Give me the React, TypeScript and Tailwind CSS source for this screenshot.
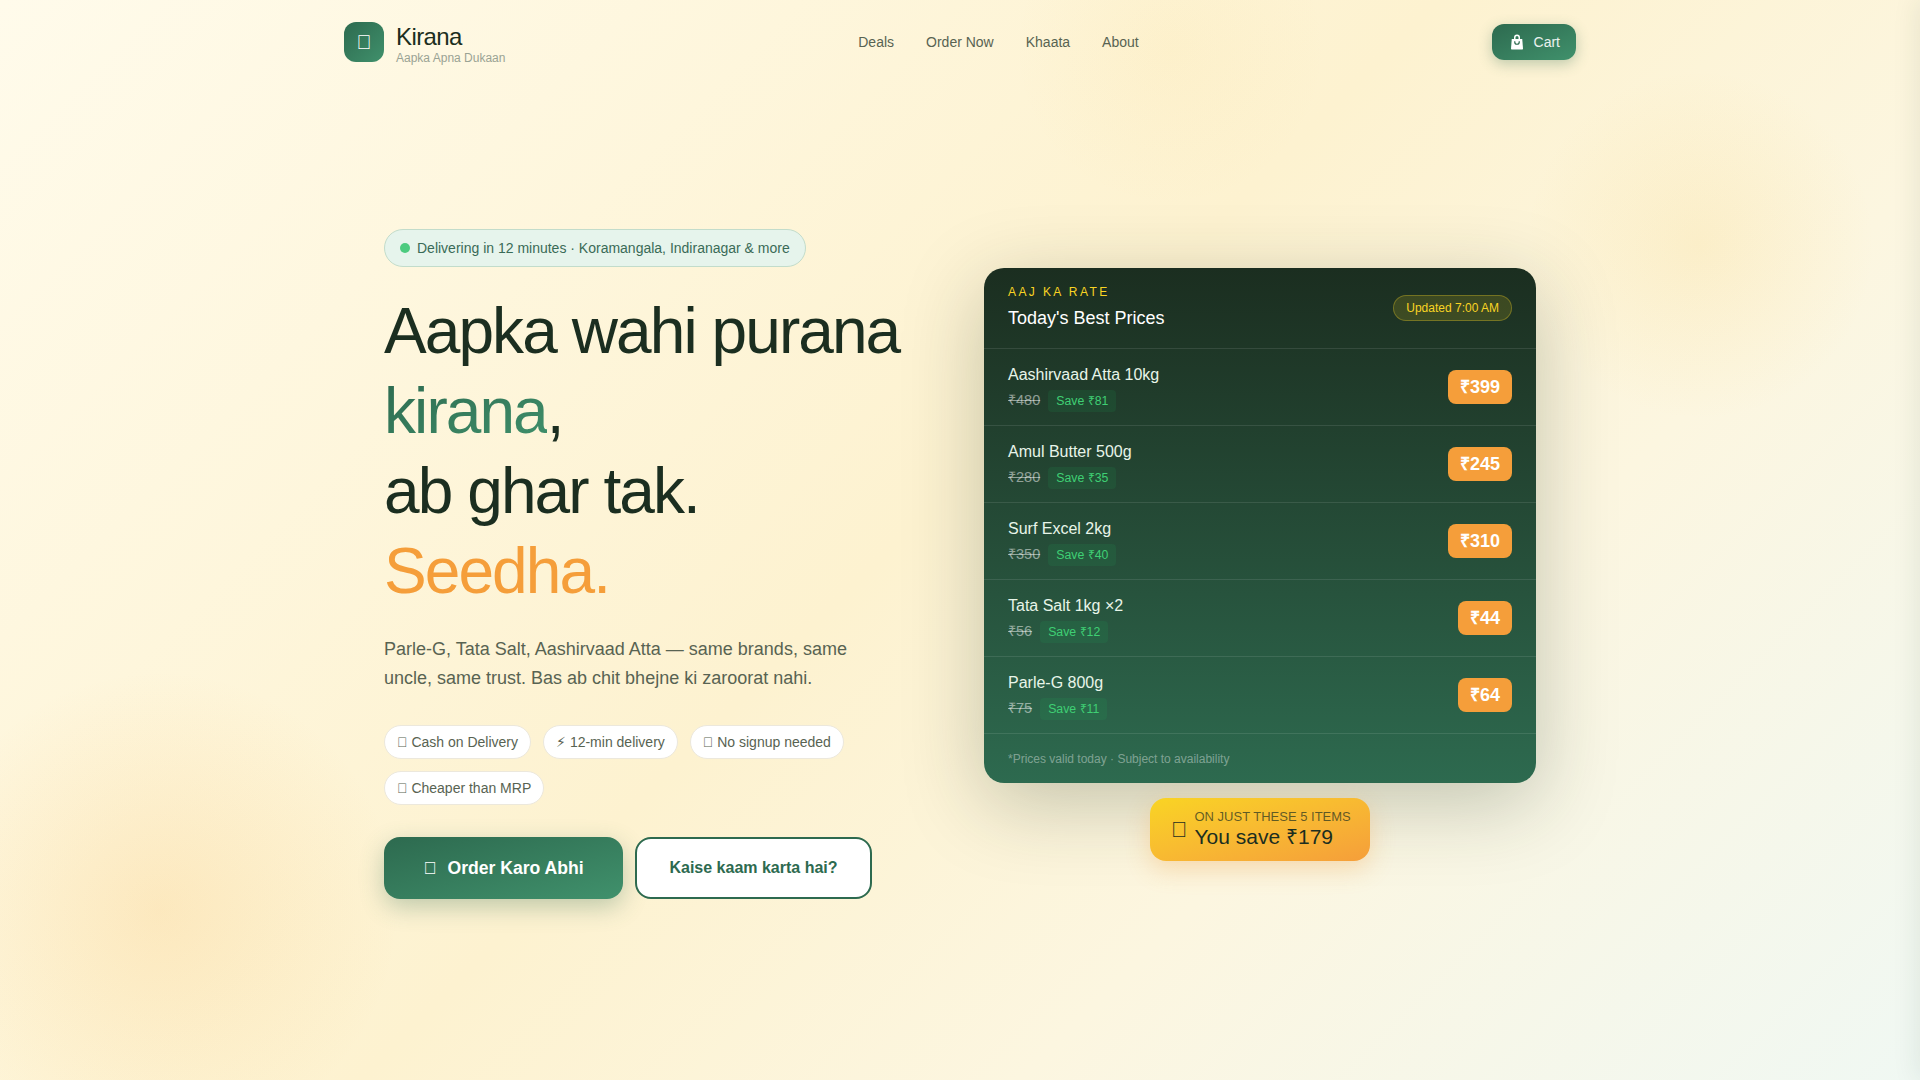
const TOFU = '\u{10FFFD}';

const items = [
  { name: 'Aashirvaad Atta 10kg', mrp: '₹480', save: 'Save ₹81', price: '₹399' },
  { name: 'Amul Butter 500g', mrp: '₹280', save: 'Save ₹35', price: '₹245' },
  { name: 'Surf Excel 2kg', mrp: '₹350', save: 'Save ₹40', price: '₹310' },
  { name: 'Tata Salt 1kg ×2', mrp: '₹56', save: 'Save ₹12', price: '₹44' },
  { name: 'Parle-G 800g', mrp: '₹75', save: 'Save ₹11', price: '₹64' },
];

const chips = [`${TOFU} Cash on Delivery`, '⚡\uFE0E 12-min delivery', `${TOFU} No signup needed`, `${TOFU} Cheaper than MRP`];

function BagIcon() {
  return (
    <svg viewBox="0 0 24 24" className="h-[18px] w-[18px]" fill="white">
      <path d="M5 8h14l1 13a1 1 0 0 1-1 1H5a1 1 0 0 1-1-1L5 8z" />
      <path d="M9 8V6a3 3 0 0 1 6 0v2" fill="none" stroke="white" strokeWidth="2" />
      <path d="M9 11v1a3 3 0 0 0 6 0v-1" fill="none" stroke="#2d6a4f" strokeWidth="1.6" />
    </svg>
  );
}

function RateRow({ name, mrp, save, price }: { name: string; mrp: string; save: string; price: string }) {
  return (
    <div className="flex h-[77px] items-center justify-between border-b border-white/10 px-6">
      <div>
        <p className="text-base leading-6 text-[#e8f5e9]">{name}</p>
        <div className="mt-[3px] flex items-center gap-2">
          <span className="text-[14.5px] text-white/50 line-through">{mrp}</span>
          <span className="rounded bg-[#22c55e]/10 px-2 py-0.5 text-[12.3px] text-[#3fcf74]">{save}</span>
        </div>
      </div>
      <span className="rounded-lg bg-[#f59e3a] px-3 py-1 text-lg leading-[26px] font-bold text-white">{price}</span>
    </div>
  );
}

export default function App() {
  return (
    <div className="relative min-h-screen overflow-hidden bg-[linear-gradient(135deg,#fffbeb_0%,#fdf2d0_48%,#fcf6e0_70%,#f0f8f3_100%)] font-['Liberation_Sans',Arial,sans-serif]">
      <div className="pointer-events-none absolute bottom-[-90px] left-[-100px] h-[520px] w-[520px] rounded-full bg-[radial-gradient(circle,rgba(245,170,60,0.16),transparent_65%)]" />
      <div className="pointer-events-none absolute left-[1510px] top-[55px] h-[380px] w-[380px] rounded-full bg-[radial-gradient(circle,rgba(245,190,60,0.12),transparent_65%)]" />
      <div className="pointer-events-none absolute left-[1000px] top-[-120px] h-[340px] w-[340px] rounded-full bg-[radial-gradient(circle,rgba(245,190,60,0.06),transparent_65%)]" />
      <div className="pointer-events-none absolute inset-y-0 left-full w-[400px] shadow-[-4px_0_24px_rgba(27,46,32,0.08)]" />

      <div className="relative mx-auto max-w-7xl px-6">
        <nav className="flex h-[84px] items-center justify-between">
          <div className="flex items-center gap-3">
            <div className="flex h-10 w-10 items-center justify-center rounded-xl bg-gradient-to-br from-[#2d6a4f] to-[#40916c] text-xl text-white">{TOFU}</div>
            <div className="pt-[5px]">
              <p className="text-2xl leading-[26px] tracking-tight text-[#1b2e20]">Kirana</p>
              <p className="text-xs leading-4 text-[#9aa394]">Aapka Apna Dukaan</p>
            </div>
          </div>
          <div className="flex items-center gap-8 text-sm text-[#586352]">
            <a>Deals</a>
            <a>Order Now</a>
            <a>Khaata</a>
            <a>About</a>
          </div>
          <button className="flex h-9 items-center gap-2 rounded-xl bg-gradient-to-br from-[#2d6a4f] to-[#40916c] px-4 text-sm text-white/90 shadow-[0_4px_14px_rgba(45,106,79,0.3)]">
            <BagIcon />
            Cart
          </button>
        </nav>

        <main className="grid grid-cols-2 items-center gap-12 px-10 pt-[145px]">
          <div>
            <div className="inline-flex h-[38px] items-center gap-[7px] rounded-full border border-[#c2dccb] bg-[#e6f4ec] px-[15px] text-sm text-[#3a6b57]">
              <span className="h-2.5 w-2.5 rounded-full bg-[#4ccb7f]" />
              Delivering in 12 minutes · Koramangala, Indiranagar &amp; more
            </div>
            <h1 className="mt-6 text-[64px] leading-[80px] tracking-[-0.03em] text-[#1b2e20]">
              Aapka wahi purana <span className="bg-gradient-to-br from-[#2d6a4f] to-[#40916c] bg-clip-text text-transparent">kirana</span>,<br />
              ab ghar tak.<br />
              <span className="text-[#f59e3a]">Seedha.</span>
            </h1>
            <p className="mt-6 max-w-lg text-lg leading-[29.25px] text-[#586352]">
              Parle-G, Tata Salt, Aashirvaad Atta — same brands, same uncle, same trust. Bas ab chit bhejne ki zaroorat nahi.
            </p>
            <div className="mt-[31px] flex max-w-[480px] flex-wrap gap-3">
              {chips.map((chip) => (
                <span key={chip} className="rounded-full border border-[#ece8dc] bg-white px-3 py-[7px] text-sm leading-[18px] text-[#586352]">{chip}</span>
              ))}
            </div>
            <div className="mt-8 flex gap-3">
              <button className="flex h-[62px] w-[239px] items-center justify-center gap-[11px] rounded-2xl bg-gradient-to-br from-[#2d6a4f] to-[#40916c] pt-px text-[17.6px] font-bold text-white shadow-[0_8px_24px_rgba(45,106,79,0.3)]">
                <span>{TOFU}</span>
                Order Karo Abhi
              </button>
              <button className="h-[62px] w-[237px] rounded-2xl border-2 border-[#2d6a4f] bg-white text-base font-bold text-[#2d6a4f]">
                Kaise kaam karta hai?
              </button>
            </div>
          </div>

          <div className="flex flex-col items-center pt-[2px]">
            <div className="w-full overflow-hidden rounded-[20px] bg-gradient-to-b from-[#1b2e20] to-[#2d6a4f] shadow-[0_20px_80px_rgba(27,46,32,0.25)]">
              <div className="flex h-[81px] items-center justify-between border-b border-white/10 px-6">
                <div className="pb-px">
                  <p className="text-xs tracking-[0.2em] text-[#f9d423]">AAJ KA RATE</p>
                  <p className="mt-1 text-lg leading-7 text-white">Today's Best Prices</p>
                </div>
                <span className="rounded-full border border-[#f9d423]/30 bg-[#f9d423]/15 px-3 py-1 text-xs text-[#f9d423]">Updated 7:00 AM</span>
              </div>
              {items.map((item) => (
                <RateRow key={item.name} {...item} />
              ))}
              <p className="flex h-[49px] items-center px-6 text-xs text-white/40">*Prices valid today · Subject to availability</p>
            </div>
            <div className="mt-[15px] flex h-[63px] w-[220px] items-center gap-[7px] rounded-2xl bg-gradient-to-br from-[#f9d423] to-[#f59e3a] px-[21px] shadow-[0_8px_24px_rgba(245,158,58,0.3)]">
              <span className="text-[22px] text-[#1b2e20]">{TOFU}</span>
              <div className="whitespace-nowrap pb-[2px]">
                <p className="text-[13px] leading-4 text-[#1b2e20]/70">ON JUST THESE 5 ITEMS</p>
                <p className="text-[21px] leading-6 text-[#1b2e20]">You save ₹179</p>
              </div>
            </div>
          </div>
        </main>
      </div>
    </div>
  );
}
